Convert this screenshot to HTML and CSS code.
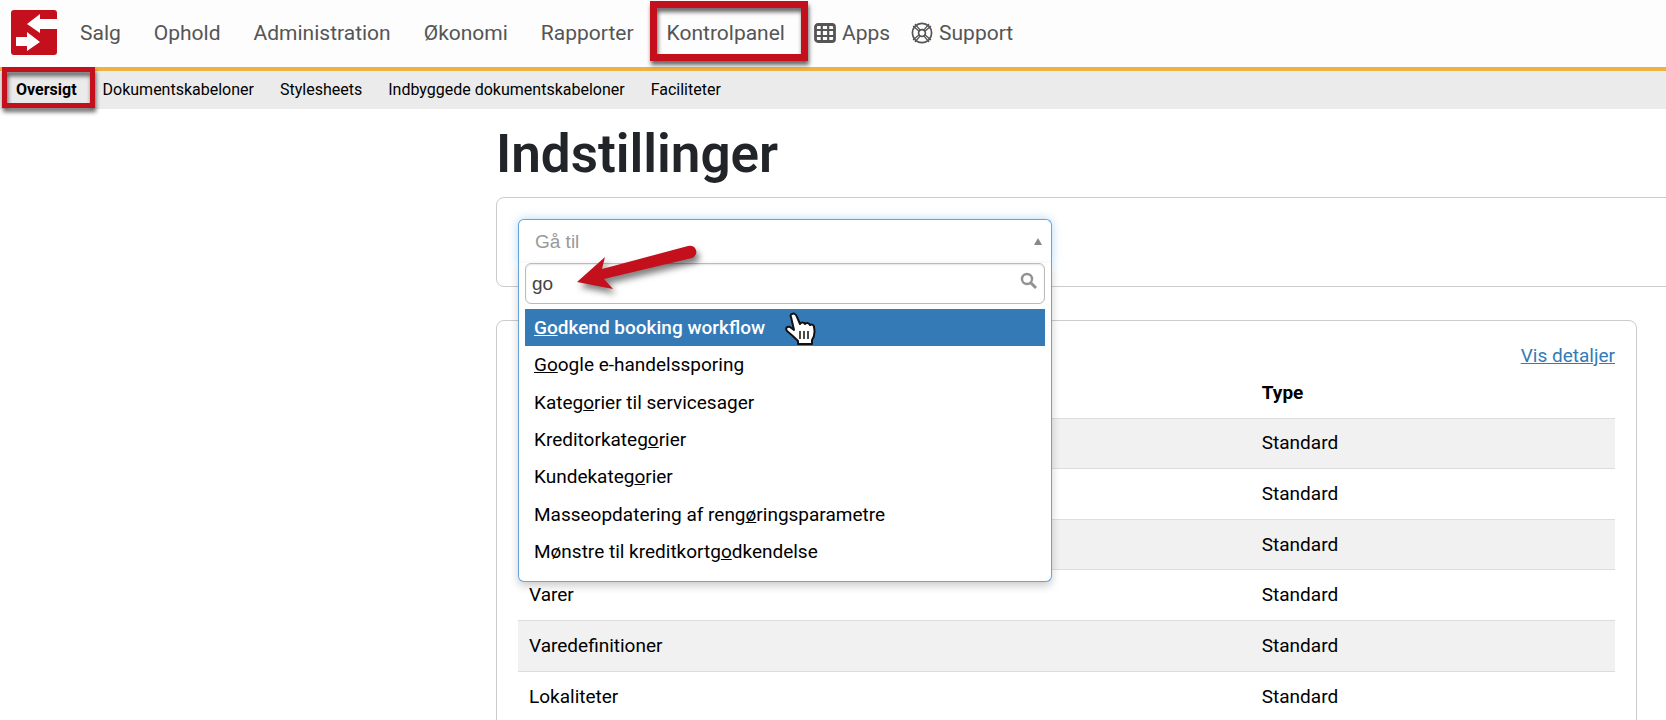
FILE: index.html
```
<!DOCTYPE html>
<html lang="da">

<head>
    <meta charset="UTF-8">
    <meta name="viewport" content="width=device-width, initial-scale=1.0">
    <title>Indstillinger</title>
    <link rel="stylesheet" href="styles.css">
</head>

<body>
    <header>
        <nav class="navbar">
            <a class="logo" href="#" aria-label="Forside">
                <svg width="46" height="46" viewBox="0 0 46 46">
                    <rect width="46" height="45" rx="3" fill="#c4101d" />
                    <path d="M46 9H29V4L16 14l13 9v-4h17z" fill="#fff" />
                    <path d="M5 27h11v-5l13 10-13 9v-5H5z" fill="#fff" />
                </svg>
            </a>
            <a class="nav-link" href="#">Salg</a>
            <a class="nav-link" href="#">Ophold</a>
            <a class="nav-link" href="#">Administration</a>
            <a class="nav-link" href="#">Økonomi</a>
            <a class="nav-link" href="#">Rapporter</a>
            <a class="nav-link marked" href="#">Kontrolpanel</a>
            <div class="nav-extra">
                <a class="nav-link" href="#">
                    <svg width="22" height="22" viewBox="0 0 22 22" fill="none" stroke="#555" stroke-width="2.2">
                        <rect x="1.5" y="2.5" width="19" height="17" rx="2.5" stroke-width="2.8" />
                        <path d="M1 8h20M1 14h20M7.8 2v18M14.2 2v18" />
                    </svg>
                    Apps
                </a>
                <a class="nav-link" href="#">
                    <svg width="22" height="22" viewBox="0 0 22 22" fill="none" stroke="#555" stroke-width="1.7">
                        <circle cx="11" cy="11" r="9.6" />
                        <circle cx="11" cy="11" r="3.4" />
                        <path d="M2 4l6.4 5.4M4 2l5.4 6.4M20 4l-6.4 5.4M18 2l-5.4 6.4M2 18l6.4-5.4M4 20l5.4-6.4M20 18l-6.4-5.4M18 20l-5.4-6.4" stroke-width="1.3" />
                    </svg>
                    Support
                </a>
            </div>
        </nav>
        <nav class="subnav">
            <a class="subnav-link active marked" href="#">Oversigt</a>
            <a class="subnav-link" href="#">Dokumentskabeloner</a>
            <a class="subnav-link" href="#">Stylesheets</a>
            <a class="subnav-link" href="#">Indbyggede dokumentskabeloner</a>
            <a class="subnav-link" href="#">Faciliteter</a>
        </nav>
    </header>

    <main class="content">
        <h1>Indstillinger</h1>

        <section class="card card-wide">
            <div class="chosen">
                <button class="chosen-single" type="button" aria-expanded="true">
                    <span>Gå til</span>
                    <svg width="8" height="8" viewBox="0 0 8 8"><path d="M4 0l4 7H0z" fill="#888" /></svg>
                </button>
                <div class="chosen-drop">
                    <div class="chosen-search">
                        <input type="text" value="go" aria-label="Søg" autocomplete="off">
                        <svg class="search-icon" width="18" height="18" viewBox="0 0 18 18" fill="none" stroke="#929292">
                            <circle cx="7" cy="7" r="5" stroke-width="2.4" />
                            <path d="M11 11l5 5" stroke-width="3" />
                        </svg>
                    </div>
                    <ul class="chosen-results">
                        <li class="highlighted"><span><em>Go</em>dkend booking workflow</span></li>
                        <li><span><em>Go</em>ogle e-handelssporing</span></li>
                        <li><span>Kateg<em>o</em>rier til servicesager</span></li>
                        <li><span>Kreditorkateg<em>o</em>rier</span></li>
                        <li><span>Kundekateg<em>o</em>rier</span></li>
                        <li><span>Masseopdatering af reng<em>ø</em>ringsparametre</span></li>
                        <li><span>Mønstre til kreditkortg<em>o</em>dkendelse</span></li>
                    </ul>
                </div>
                <svg class="arrow" width="126" height="54" viewBox="0 0 126 54">
                    <path d="M5 36L33 11l-3 12L116 0a6 6 0 0 1 4 12L32 33l9 10z" fill="#c4101d" />
                </svg>
                <svg class="pointer" width="32" height="34" viewBox="0 0 32 34">
                    <path d="M8 2c2-1 4 0 5 3l3 7c1-2 4-2 5 0 1-2 4-1 5 1 2-1 4 0 4 2 1 5 1 9-2 13v4H14v-3c-3-3-6-6-11-10-2-3 0-5 3-4l4 3L7 5c-1-1 0-3 1-3z" fill="#fff" stroke="#111" stroke-width="2" stroke-linejoin="round" />
                    <path d="M16 19v8M20 19v8M24 19v8" stroke="#111" stroke-width="1.5" />
                </svg>
            </div>
        </section>

        <section class="card">
            <div class="card-actions">
                <a href="#">Vis detaljer</a>
            </div>
            <table class="table">
                <thead>
                    <tr>
                        <th class="col-name"></th>
                        <th>Type</th>
                    </tr>
                </thead>
                <tbody>
                    <tr><td></td><td>Standard</td></tr>
                    <tr><td></td><td>Standard</td></tr>
                    <tr><td></td><td>Standard</td></tr>
                    <tr><td>Varer</td><td>Standard</td></tr>
                    <tr><td>Varedefinitioner</td><td>Standard</td></tr>
                    <tr><td>Lokaliteter</td><td>Standard</td></tr>
                </tbody>
            </table>
        </section>
    </main>
</body>

</html>
```
FILE: styles.css
```
* {
    box-sizing: border-box;
}

body {
    margin: 0;
    background-color: #fff;
    color: #000;
    font-family: Roboto, sans-serif;
    font-size: 19px;
    line-height: 24px;
    overflow: hidden;
}

a {
    color: #337ab7;
}

.navbar {
    display: flex;
    align-items: center;
    gap: 33px;
    height: 71px;
    padding: 0 0 2px 11px;
    background-color: #fdfdfd;
    border-bottom: 4px solid #f0b143;
}

.logo {
    display: flex;
    margin-right: -10px;
}

.nav-link {
    display: flex;
    align-items: center;
    gap: 6px;
    color: #555;
    font-size: 21px;
    text-decoration: none;
}

.nav-extra {
    display: flex;
    gap: 21px;
    margin-left: -4px;
}

.subnav {
    display: flex;
    align-items: center;
    gap: 26px;
    height: 38px;
    padding-left: 16px;
    background-color: #ebebeb;
}

.subnav-link {
    color: #000;
    font-size: 16px;
    text-decoration: none;
}

.subnav-link.active {
    font-weight: 700;
}

/* red frame around the current menu item */
.marked {
    position: relative;
}

.marked::after {
    content: "";
    position: absolute;
    inset: -20px -23px -16px -17px;
    border: 7px solid #c4101d;
    filter: drop-shadow(1px 4px 2px rgba(0, 0, 0, 0.6));
    z-index: 1;
}

.subnav .marked::after {
    inset: -11px -18px -6px -14px;
    border-width: 5px;
}

.content {
    padding: 15px 29px 0 496px;
}

h1 {
    margin: 0 0 13px;
    color: #212529;
    font-size: 53px;
    font-weight: 600;
    line-height: 60px;
}

.card {
    margin-bottom: 33px;
    padding: 21px;
    border: 1px solid #ccc;
    border-radius: 8px;
}

.card-wide {
    margin-right: -60px;
}

.chosen {
    position: relative;
    width: 534px;
    font-family: "Liberation Sans", Arial, sans-serif;
}

.chosen-single {
    display: flex;
    align-items: center;
    justify-content: space-between;
    width: 100%;
    height: 46px;
    padding: 0 9px 2px 16px;
    border: 1px solid #66a5dc;
    border-bottom: none;
    border-radius: 6px 6px 0 0;
    background-color: #fff;
    color: #999;
    font-family: inherit;
    font-size: 19px;
    box-shadow: 0 0 10px rgba(102, 175, 233, 0.5);
}

.chosen-drop {
    position: absolute;
    top: 44px;
    left: 0;
    right: 0;
    padding: 0 6px 10px;
    border: 1px solid #66a5dc;
    border-top: none;
    border-radius: 0 0 6px 6px;
    background-color: #fff;
    box-shadow: 0 4px 8px rgba(0, 0, 0, 0.2);
}

.chosen-search {
    position: relative;
}

.chosen-search input {
    display: block;
    width: 100%;
    height: 41px;
    padding: 0 40px 0 6px;
    border: 1px solid #bbb;
    border-radius: 6px;
    outline: none;
    box-shadow: inset 0 1px 2px rgba(0, 0, 0, 0.1);
    color: #444;
    font-family: inherit;
    font-size: 19px;
}

.search-icon {
    position: absolute;
    top: 9px;
    right: 7px;
}

.chosen-results {
    display: flex;
    flex-direction: column;
    height: 262px;
    margin: 5px 0 0;
    padding: 0;
    list-style: none;
    font-family: Roboto, sans-serif;
}

.chosen-results li {
    display: flex;
    flex: 1;
    align-items: center;
    padding: 0 9px;
}

.chosen-results em {
    font-style: normal;
    text-decoration: underline;
}

.chosen-results .highlighted {
    background-color: #337ab7;
    color: #fff;
    font-weight: 500;
}

.arrow {
    position: absolute;
    top: 27px;
    left: 54px;
    overflow: visible;
    filter: drop-shadow(3px 5px 3px rgba(0, 0, 0, 0.5));
}

.pointer {
    position: absolute;
    top: 93px;
    left: 266px;
}

.card-actions {
    display: flex;
    justify-content: flex-end;
    padding-top: 2px;
}

.table {
    width: 100%;
    height: 354px;
    border-collapse: collapse;
    table-layout: fixed;
}

.col-name {
    width: 66.8%;
}

.table th,
.table td {
    height: 50px;
    padding: 0 11px;
    text-align: left;
}

.table td {
    border-top: 1px solid #ddd;
}

.table tbody tr:nth-child(odd) {
    background-color: #f1f1f1;
}
```
